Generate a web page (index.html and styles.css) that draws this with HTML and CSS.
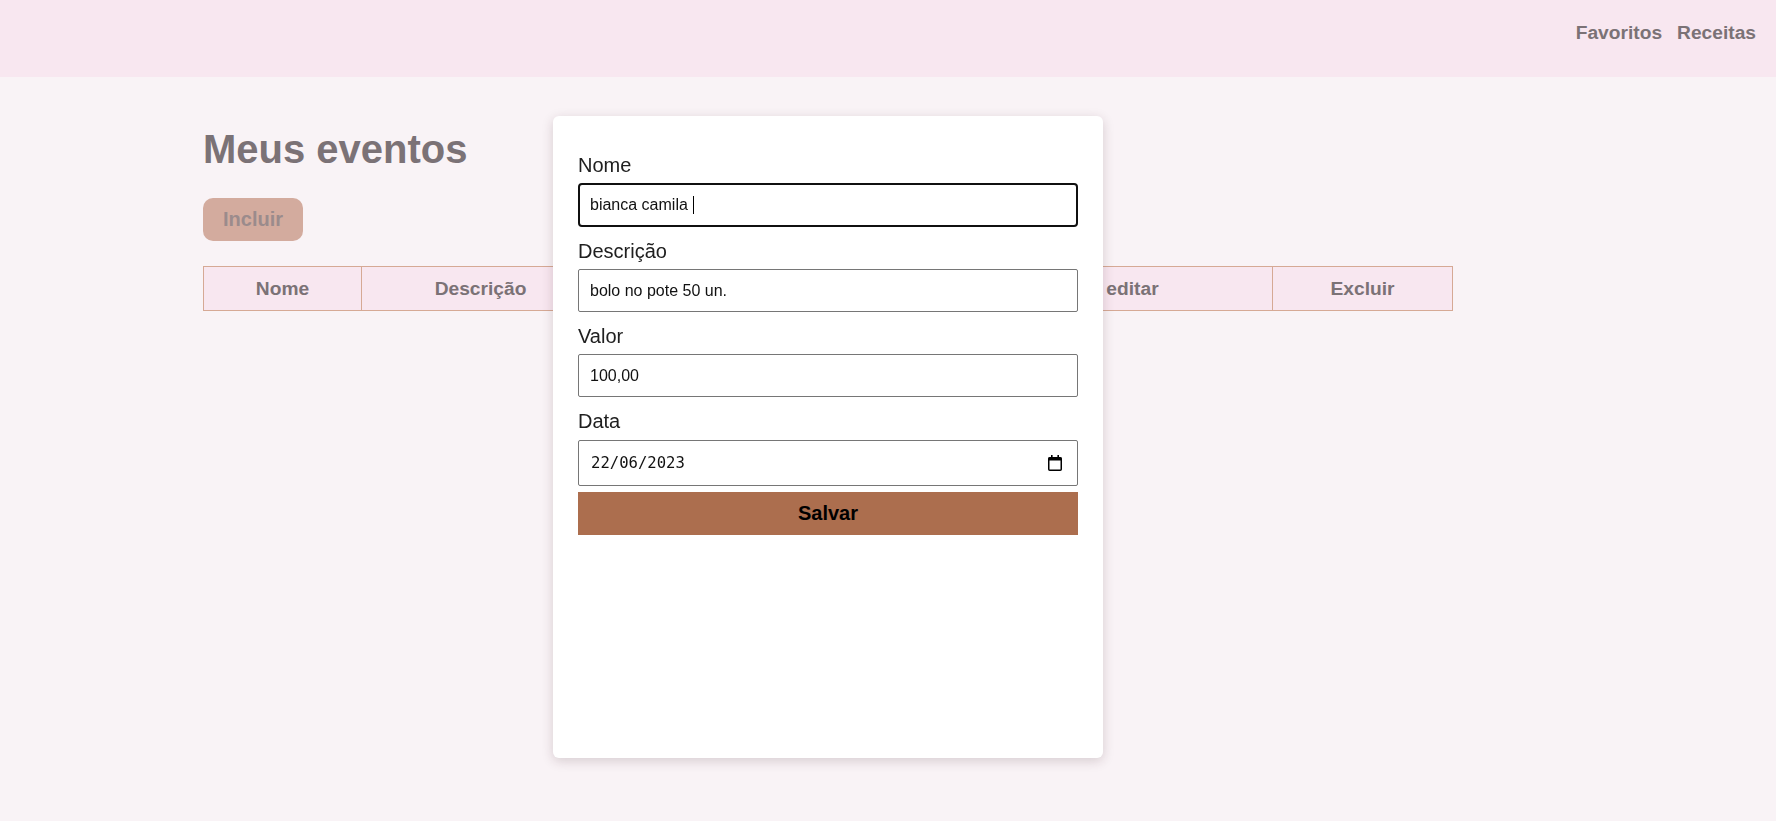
FILE: index.html
```html
<!DOCTYPE html>
<html lang="pt-BR">
<head>
<meta charset="utf-8">
<title>Meus eventos</title>
<link rel="stylesheet" href="styles.css">
</head>
<body>
<header class="topbar">
  <nav class="nav">
    <a class="nav-link" href="#">Favoritos</a>
    <a class="nav-link" href="#">Receitas</a>
  </nav>
</header>

<main class="content">
  <h1 class="title">Meus eventos</h1>
  <button class="btn-add" type="button">Incluir</button>
  <table class="events">
    <colgroup>
      <col class="c-nome">
      <col class="c-desc">
      <col class="c-valor">
      <col class="c-data">
      <col class="c-editar">
      <col class="c-excluir">
    </colgroup>
    <thead>
      <tr>
        <th>Nome</th>
        <th>Descrição</th>
        <th></th>
        <th></th>
        <th>editar</th>
        <th>Excluir</th>
      </tr>
    </thead>
  </table>
</main>

<div class="modal">
  <form class="form">
    <label class="label label--first">Nome</label>
    <div class="field field--focus"><span>bianca camila&nbsp;</span><span class="caret"></span></div>

    <label class="label">Descrição</label>
    <div class="field"><span>bolo no pote 50 un.</span></div>

    <label class="label">Valor</label>
    <div class="field"><span>100,00</span></div>

    <label class="label">Data</label>
    <div class="field field--date">
      <span class="date-text">22/06/2023</span>
      <svg class="cal-icon" width="14" height="16" viewBox="0 0 14 16" aria-hidden="true">
        <rect x="3" y="0" width="1.6" height="3" fill="#000"/>
        <rect x="9.4" y="0" width="1.6" height="3" fill="#000"/>
        <rect x="0.75" y="2.75" width="12.5" height="12.5" rx="1" fill="none" stroke="#000" stroke-width="1.5"/>
        <rect x="0.5" y="2.5" width="13" height="3" fill="#000"/>
      </svg>
    </div>

    <button class="btn-save" type="button">Salvar</button>
  </form>
</div>
</body>
</html>
```

FILE: styles.css
```css
html, body {
  margin: 0;
  padding: 0;
}

body {
  background: #f9f3f6;
  font-family: "Liberation Sans", Arial, sans-serif;
  min-height: 821px;
}

.topbar {
  height: 77px;
  box-sizing: border-box;
  background: #f8e7f0;
  display: flex;
  justify-content: flex-end;
  padding: 22px 20px 0 0;
}

.nav {
  display: flex;
  gap: 15px;
  height: 22px;
}

.nav-link {
  font-size: 19.2px;
  line-height: 22px;
  font-weight: bold;
  color: #7b7276;
  text-decoration: none;
}

.content {
  padding: 49px 0 0 203px;
}

.title {
  margin: 0;
  font-size: 40px;
  line-height: 46px;
  font-weight: bold;
  color: #7b7276;
}

.btn-add {
  display: block;
  margin-top: 26px;
  height: 43px;
  padding: 0 20px;
  border: none;
  border-radius: 10px;
  background: #d3ab9e;
  color: #9b8b8c;
  font-family: "Liberation Sans", Arial, sans-serif;
  font-size: 20px;
  font-weight: bold;
}

.events {
  margin-top: 25px;
  width: 1249px;
  table-layout: fixed;
  border-collapse: collapse;
}

.c-nome { width: 158px; }
.c-desc { width: 238px; }
.c-valor { width: 196px; }
.c-data { width: 197px; }
.c-editar { width: 280px; }
.c-excluir { width: 180px; }

.events th {
  height: 43px;
  padding: 0;
  border: 1px solid #d6a995;
  background: #f8e7f0;
  color: #7b7276;
  font-size: 19.2px;
  font-weight: bold;
  text-align: center;
}

.modal {
  position: fixed;
  left: 553px;
  top: 116px;
  width: 550px;
  height: 642px;
  box-sizing: border-box;
  padding: 38px 25px 25px;
  background: #ffffff;
  border-radius: 6px;
  box-shadow: 0 3px 12px rgba(60, 30, 40, 0.18);
}

.form {
  display: flex;
  flex-direction: column;
}

.label {
  display: block;
  margin-top: 13px;
  margin-bottom: 6px;
  font-size: 20px;
  line-height: 23px;
  color: #202020;
}

.label--first {
  margin-top: 0;
}

.field {
  height: 43px;
  box-sizing: border-box;
  border: 1px solid #767676;
  border-radius: 2px;
  padding: 0 11px;
  display: flex;
  align-items: center;
  font-size: 16px;
  color: #111111;
  background: #ffffff;
}

.field--focus {
  height: 44px;
  border: 2px solid #101010;
  border-radius: 4px;
  padding: 0 10px;
}

.caret {
  display: inline-block;
  width: 1px;
  height: 18px;
  background: #000000;
  margin-left: 1px;
}

.field--date {
  height: 46px;
  margin-top: 1px;
  justify-content: space-between;
  padding: 0 15px 0 12px;
}

.date-text {
  font-family: "DejaVu Sans Mono", "Liberation Mono", monospace;
  font-size: 15.6px;
  color: #111111;
}

.cal-icon {
  display: block;
}

.btn-save {
  margin-top: 6px;
  height: 43px;
  width: 100%;
  border: none;
  background: #ac6e4e;
  color: #000000;
  font-family: "Liberation Sans", Arial, sans-serif;
  font-size: 20px;
  font-weight: bold;
}
```
